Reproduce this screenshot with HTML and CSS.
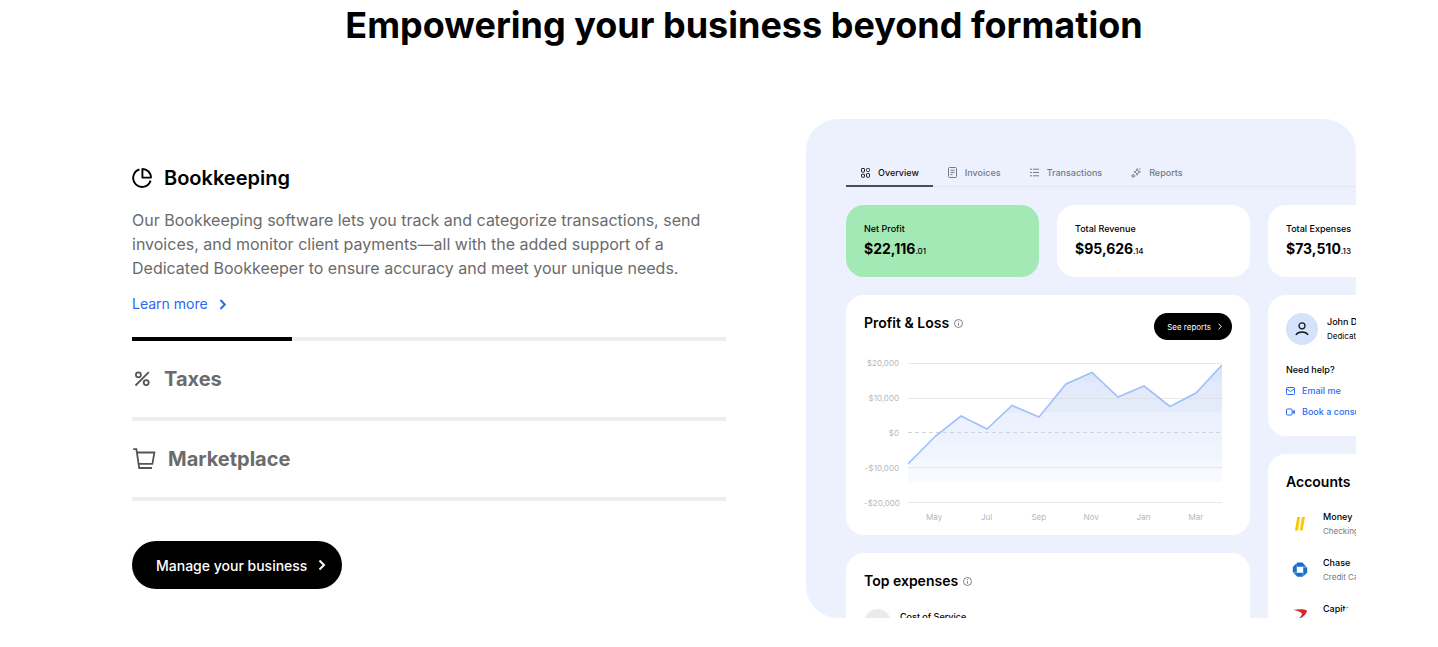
FILE: index.html
```html
<!DOCTYPE html>
<html lang="en">
<head>
    <meta charset="UTF-8">
    <meta name="viewport" content="width=device-width, initial-scale=1.0">
    <title>Empowering your business beyond formation</title>
    <link rel="stylesheet" href="styles.css">
</head>
<body>
    <section class="business">
        <h2 class="business-title">Empowering your business beyond formation</h2>
        <div class="business-content">
            <div class="features">
                <div class="feature active">
                    <button type="button" class="feature-button">
                        <svg width="20" height="20" viewBox="0 0 20 20" fill="none" stroke="currentColor" stroke-width="1.9" stroke-linejoin="round">
                            <path d="M7.4 1.5A8.9 8.9 0 1 0 18.6 12.6"/>
                            <path d="M10.4 1A8.6 8.6 0 0 1 19 9.6H10.4Z"/>
                        </svg>
                        Bookkeeping
                    </button>
                    <p class="feature-text">Our Bookkeeping software lets you track and categorize transactions, send invoices, and monitor client payments—all with the added support of a Dedicated Bookkeeper to ensure accuracy and meet your unique needs.</p>
                    <a href="#" class="learn-more">Learn more
                        <svg width="8" height="12" viewBox="0 0 8 12" fill="none" stroke="currentColor" stroke-width="2"><path d="M1.5 2L5.8 6.5L1.5 11"/></svg>
                    </a>
                    <div class="progress"><div class="progress-fill"></div></div>
                </div>
                <div class="feature">
                    <button type="button" class="feature-button">
                        <svg width="20" height="20" viewBox="0 0 20 20" fill="none" stroke="currentColor" stroke-width="1.8">
                            <path d="M3.5 16.5L16.8 3.2"/>
                            <circle cx="6.4" cy="5.8" r="2.5"/>
                            <circle cx="14.2" cy="13.6" r="2.5"/>
                        </svg>
                        Taxes
                    </button>
                    <div class="progress"></div>
                </div>
                <div class="feature">
                    <button type="button" class="feature-button">
                        <svg width="24" height="24" viewBox="0 0 24 24" fill="none" stroke="currentColor" stroke-width="1.8">
                            <path d="M1.2 2.2H4.4L7.2 21H20"/>
                            <path d="M4.9 5.5H22.4L20.4 16.9H6.6"/>
                        </svg>
                        Marketplace
                    </button>
                    <div class="progress"></div>
                </div>
                <a href="#" class="manage-button">Manage your business
                    <svg width="8" height="12" viewBox="0 0 8 12" fill="none" stroke="currentColor" stroke-width="2"><path d="M1.5 1.5L6 6L1.5 10.5"/></svg>
                </a>
            </div>

            <div class="preview">
                <nav class="tabs">
                    <a href="#" class="tab current">
                        <svg width="9" height="10" viewBox="0 0 9 10" fill="none" stroke="currentColor" stroke-width=".9">
                            <rect x=".5" y=".5" width="3" height="3.6" rx=".5"/><rect x="5.5" y=".5" width="3" height="3" rx=".9"/>
                            <rect x=".5" y="6.2" width="3" height="3" rx=".5"/><rect x="5.5" y="5.6" width="3" height="3.6" rx=".5"/>
                        </svg>
                        Overview
                    </a>
                    <a href="#" class="tab">
                        <svg width="9" height="11" viewBox="0 0 9 11" fill="none" stroke="currentColor">
                            <rect x=".5" y=".5" width="8" height="10" rx="1"/><path d="M2.5 3.2H6.6M2.5 5.4H6.6M2.5 7.6H4.5"/>
                        </svg>
                        Invoices
                    </a>
                    <a href="#" class="tab">
                        <svg width="9" height="9" viewBox="0 0 9 9" fill="none" stroke="currentColor">
                            <path d="M0 1.2H2M3 1.2H9M0 4.5H2M3 4.5H9M0 7.8H2M3 7.8H9"/>
                        </svg>
                        Transactions
                    </a>
                    <a href="#" class="tab">
                        <svg width="10" height="10" viewBox="0 0 10 10" fill="none" stroke="currentColor" stroke-width=".9">
                            <path d="M6.2 .6L7 3L9.4 3.8L7 4.8L6 7.2L5.2 4.8L2.9 4L5.2 3ZM2.4 6L3 7.4L4.2 8L2.8 8.4L2 9.6L1.6 8.2L.4 7.8L1.8 7.2ZM8.8 .2V1.6"/>
                        </svg>
                        Reports
                    </a>
                </nav>

                <div class="stats">
                    <div class="stat green">
                        <span class="stat-label">Net Profit</span>
                        <span class="stat-value">$22,116<small>.01</small></span>
                    </div>
                    <div class="stat">
                        <span class="stat-label">Total Revenue</span>
                        <span class="stat-value">$95,626<small>.14</small></span>
                    </div>
                    <div class="stat">
                        <span class="stat-label">Total Expenses</span>
                        <span class="stat-value">$73,510<small>.13</small></span>
                    </div>
                </div>

                <div class="panels">
                    <div class="panel-column">
                        <div class="card profit">
                            <div class="card-header">
                                <h3 class="card-title">Profit &amp; Loss
                                    <svg width="9" height="9" viewBox="0 0 9 9" fill="none" stroke="#666" stroke-width=".8"><circle cx="4.5" cy="4.5" r="4"/><path d="M4.5 4V6.7M4.5 2.2V3.1"/></svg>
                                </h3>
                                <button type="button" class="reports-button">See reports
                                    <svg width="4" height="7" viewBox="0 0 4 7" fill="none" stroke="currentColor"><path d="M.6 .8L3.3 3.5L.6 6.2"/></svg>
                                </button>
                            </div>
                            <div class="chart">
                                <div class="chart-values">
                                    <span>$20,000</span>
                                    <span>$10,000</span>
                                    <span>$0</span>
                                    <span>-$10,000</span>
                                    <span>-$20,000</span>
                                </div>
                                <svg class="chart-plot" viewBox="0 0 314 140">
                                    <defs>
                                        <linearGradient id="area" gradientUnits="userSpaceOnUse" x1="0" y1="0" x2="0" y2="119">
                                            <stop offset="0" stop-color="#dbe6fb"/>
                                            <stop offset=".15" stop-color="#dde7fb"/>
                                            <stop offset=".16" stop-color="#e2eafb"/>
                                            <stop offset=".41" stop-color="#e4ecfb"/>
                                            <stop offset=".42" stop-color="#ecf1fd"/>
                                            <stop offset=".66" stop-color="#edf3fd"/>
                                            <stop offset=".67" stop-color="#f0f5fd"/>
                                            <stop offset=".81" stop-color="#f1f6fd"/>
                                            <stop offset=".82" stop-color="#f5f9fe"/>
                                            <stop offset="1" stop-color="#f7fafe"/>
                                        </linearGradient>
                                    </defs>
                                    <path fill="url(#area)" d="M0 101L27 73.5L53 53L79 66L104 42.5L131 54L158 21L184 9.5L210 34L236 23L262 43.5L288 30L314 3V119H0Z"/>
                                    <path fill="none" stroke="#d5d9e0" stroke-opacity=".6" d="M0 .5H314M0 35.5H314M0 104.5H314M0 139.5H314"/>
                                    <path fill="none" stroke="#cfd3da" stroke-dasharray="4 3" d="M0 69.5H314"/>
                                    <path fill="none" stroke="#9fc0f8" stroke-width="1.6" d="M0 101L27 73.5L53 53L79 66L104 42.5L131 54L158 21L184 9.5L210 34L236 23L262 43.5L288 30L314 2"/>
                                </svg>
                                <div class="chart-months">
                                    <span>May</span>
                                    <span>Jul</span>
                                    <span>Sep</span>
                                    <span>Nov</span>
                                    <span>Jan</span>
                                    <span>Mar</span>
                                </div>
                            </div>
                        </div>
                        <div class="card">
                            <h3 class="card-title">Top expenses
                                <svg width="9" height="9" viewBox="0 0 9 9" fill="none" stroke="#666" stroke-width=".8"><circle cx="4.5" cy="4.5" r="4"/><path d="M4.5 4V6.7M4.5 2.2V3.1"/></svg>
                            </h3>
                            <div class="expense">
                                <span class="expense-dot"></span>
                                Cost of Service
                            </div>
                        </div>
                    </div>

                    <div class="panel-column">
                        <div class="card help">
                            <div class="person">
                                <span class="avatar">
                                    <svg width="14" height="14" viewBox="0 0 14 14" fill="none" stroke="#16181d" stroke-width="1.3"><circle cx="7" cy="3.8" r="3"/><path d="M.8 13C3.6 9 10.4 9 13.2 13"/></svg>
                                </span>
                                <div class="lines">
                                    <span class="name">John Doe</span>
                                    <span class="role">Dedicated Bookkeeper</span>
                                </div>
                            </div>
                            <span class="help-title">Need help?</span>
                            <a href="#" class="help-link">
                                <svg width="9" height="8" viewBox="0 0 9 8" fill="none" stroke="currentColor"><rect x=".5" y=".5" width="8" height="7" rx=".8"/><path d="M1 2L4.5 4.6L8 2"/></svg>
                                Email me
                            </a>
                            <a href="#" class="help-link">
                                <svg width="9" height="8" viewBox="0 0 9 8" fill="none" stroke="currentColor"><rect x=".5" y="1" width="5.6" height="6" rx=".8"/><path fill="currentColor" d="M6.6 4L8.3 2.4V5.6Z"/></svg>
                                Book a consultation
                            </a>
                        </div>
                        <div class="card">
                            <h3 class="card-title">Accounts</h3>
                            <div class="account">
                                <svg width="16" height="16" viewBox="0 0 16 16" fill="#fbc70d"><path d="M5.2 1H8.2L6 14.6H3Z"/><path d="M9.9 1H12.9L10.7 14.6H7.7Z"/></svg>
                                <div class="lines">
                                    <span class="name">Money</span>
                                    <span class="type">Checking</span>
                                </div>
                            </div>
                            <div class="account">
                                <svg width="16" height="16" viewBox="0 0 16 16" fill="#1570cf"><path d="M5 .6H10.4L14.3 4.8H5Z"/><path d="M15.2 5.2V10.6L11.2 14.6V5.2Z"/><path d="M10.8 14.8H5.4L1.4 10.8H10.8Z"/><path d="M.8 10.4V5L4.8 1V10.4Z"/></svg>
                                <div class="lines">
                                    <span class="name">Chase</span>
                                    <span class="type">Credit Card</span>
                                </div>
                            </div>
                            <div class="account">
                                <svg width="16" height="16" viewBox="0 0 16 16" fill="#d22630"><path d="M1.2 2C6 .8 12 .8 15 2.4C14.8 5.8 11 9.4 5.4 12C8 9.6 9.8 7.4 10 5.4C8 3.6 5 2.8 1.2 2Z"/></svg>
                                <div class="lines">
                                    <span class="name">Capital One</span>
                                    <span class="type">Credit Card</span>
                                </div>
                            </div>
                        </div>
                    </div>
                </div>
            </div>
        </div>
    </section>
</body>
</html>
```
FILE: styles.css
```css
* {
    box-sizing: border-box;
}
body {
    margin: 0;
    background-color: #fff;
    color: #000;
    font-family: Inter, "Liberation Sans", sans-serif;
}
a {
    text-decoration: none;
}
button {
    font-family: inherit;
    border: none;
    cursor: pointer;
}
svg {
    display: block;
    flex-shrink: 0;
}
.business {
    padding: 3px 82px 29px 132px;
}
.business-title {
    margin: 0 0 72px;
    font-size: 36px;
    line-height: 44px;
    font-weight: 700;
    text-align: center;
}
.business-content {
    display: grid;
    grid-template-columns: 54fr 50fr;
    gap: 80px;
}

/* Left side */
.features {
    padding-top: 21px;
}
.feature-button {
    display: flex;
    align-items: center;
    gap: 12px;
    width: 100%;
    height: 76px;
    padding: 0;
    background: none;
    color: #6b6b6b;
    font-size: 20px;
    font-weight: 700;
}
.feature-button svg {
    color: #555;
}
.active .feature-button {
    height: auto;
    padding: 26px 0 18px;
    line-height: 24px;
    font-weight: 600;
}
.active .feature-button, .active .feature-button svg {
    color: #000;
}
.feature-text {
    margin: 0 0 12px;
    color: #6b6b6b;
    font-size: 16px;
    line-height: 24px;
}
.learn-more {
    display: flex;
    align-items: center;
    gap: 11px;
    margin-bottom: 21px;
    color: #2b6af3;
    font-size: 14px;
    line-height: 24px;
}
.progress {
    height: 4px;
    background-color: #eee;
}
.progress-fill {
    width: 27%;
    height: 100%;
    background-color: #000;
}
.manage-button {
    display: inline-flex;
    align-items: center;
    gap: 11px;
    height: 48px;
    margin-top: 40px;
    padding: 0 16px 0 24px;
    border-radius: 24px;
    background-color: #000;
    color: #fff;
    font-size: 14px;
    font-weight: 500;
}

/* Dashboard preview, cut off at the right and at the bottom */
.preview {
    height: 499px;
    min-width: 0;
    padding: 41px 0 0 40px;
    overflow: hidden;
    border-radius: 32px;
    background-color: #edf1fd;
}
.tabs {
    display: flex;
    height: 27px;
    margin-bottom: 18px;
    border-bottom: 1px solid #e4e6ee;
}
.tab {
    display: flex;
    align-items: center;
    gap: 8px;
    height: 27px;
    padding: 0 14px 0 15px;
    border-bottom: 2px solid transparent;
    color: #777a80;
    font-size: 9px;
    font-weight: 500;
}
.tab.current {
    border-color: #4d4e54;
    color: #111;
}
.stats {
    display: grid;
    grid-template-columns: 193px 193px 193px;
    gap: 18px;
    margin-bottom: 18px;
}
.stat {
    display: flex;
    flex-direction: column;
    height: 72px;
    padding: 18px;
    border-radius: 18px;
    background-color: #fff;
}
.stat.green {
    background-color: #a3e9b6;
}
.stat-label {
    font-size: 9px;
    line-height: 12px;
    font-weight: 500;
}
.stat-value {
    margin-top: 4px;
    font-size: 14px;
    line-height: 20px;
    font-weight: 700;
}
.stat-value small {
    font-size: 8px;
    font-weight: 500;
}
.panels {
    display: grid;
    grid-template-columns: 404px 193px;
    gap: 18px;
}
.panel-column {
    display: flex;
    flex-direction: column;
    gap: 18px;
}
.card {
    padding: 18px;
    border-radius: 18px;
    background-color: #fff;
}
.profit {
    height: 240px;
}
.card-header {
    display: flex;
    justify-content: space-between;
    margin-bottom: 18px;
}
.card-title {
    display: flex;
    align-items: center;
    gap: 5px;
    height: 20px;
    margin: 0;
    font-size: 14px;
    line-height: 20px;
    font-weight: 600;
}
.reports-button {
    display: flex;
    align-items: center;
    gap: 7px;
    height: 27px;
    padding: 0 10px 0 13px;
    border-radius: 14px;
    background-color: #000;
    color: #fff;
    font-size: 8px;
}
.chart {
    display: grid;
    grid-template-columns: 35px 314px;
    column-gap: 9px;
    color: #b5b7ba;
    font-size: 8px;
    line-height: 10px;
}
.chart-values {
    display: flex;
    flex-direction: column;
    justify-content: space-between;
    text-align: right;
}
.chart-plot {
    width: 314px;
    height: 140px;
    margin: 5px 0;
}
.chart-months {
    display: flex;
    grid-column: 2;
    margin-top: 4px;
    text-align: center;
}
.chart-months span {
    flex: 1;
}
.expense {
    display: flex;
    gap: 9px;
    margin-top: 18px;
    font-size: 9px;
    line-height: 16px;
    font-weight: 500;
}
.expense-dot {
    width: 27px;
    height: 27px;
    border-radius: 50%;
    background-color: #ebebeb;
}
.help {
    height: 141px;
    overflow: hidden;
    white-space: nowrap;
}
.person {
    display: flex;
    align-items: center;
    gap: 9px;
    margin-bottom: 19px;
}
.avatar {
    display: flex;
    flex-shrink: 0;
    align-items: center;
    justify-content: center;
    width: 32px;
    height: 32px;
    border-radius: 50%;
    background-color: #d4e2fc;
}
.lines {
    display: flex;
    flex-direction: column;
    gap: 2px;
    line-height: 13px;
}
.name {
    font-size: 9px;
    font-weight: 500;
}
.role {
    font-size: 8px;
}
.type {
    color: #777;
    font-size: 8px;
}
.help-title {
    display: block;
    font-size: 9px;
    line-height: 12px;
    font-weight: 500;
}
.help-link {
    display: flex;
    align-items: center;
    gap: 7px;
    margin-top: 9px;
    color: #2b6af3;
    font-size: 9px;
    line-height: 12px;
    font-weight: 500;
}
.account {
    display: flex;
    align-items: center;
    gap: 15px;
    margin: 18px 0 0 6px;
}
```
